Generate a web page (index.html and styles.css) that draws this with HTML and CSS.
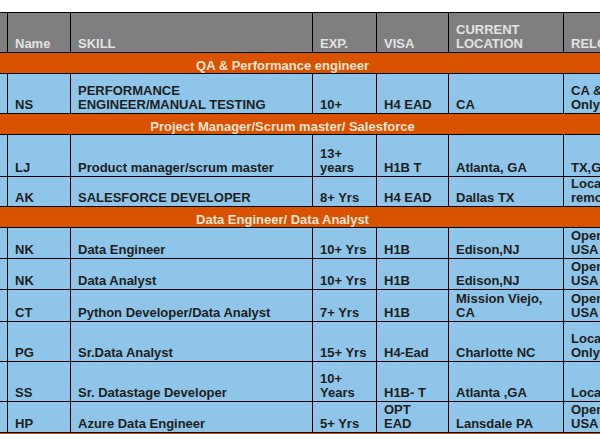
FILE: index.html
```html
<!DOCTYPE html>
<html lang="en">
<head>
<meta charset="utf-8">
<title>Hotlist</title>
<link rel="stylesheet" href="styles.css">
</head>
<body>
<div class="sheet">
<table class="grid">
  <colgroup>
    <col class="c0"><col class="c1"><col class="c2"><col class="c3"><col class="c4"><col class="c5"><col class="c6">
  </colgroup>
  <tr class="head h40">
    <td></td><td>Name</td><td>SKILL</td><td>EXP.</td><td>VISA</td><td>CURRENT<br>LOCATION</td><td>RELOCATION</td>
  </tr>
  <tr class="section"><td colspan="7">QA &amp; Performance engineer</td></tr>
  <tr class="h40">
    <td></td><td>NS</td><td>PERFORMANCE<br>ENGINEER/MANUAL TESTING</td><td>10+</td><td>H4 EAD</td><td>CA</td><td>CA &amp;<br>Only</td>
  </tr>
  <tr class="section"><td colspan="7">Project Manager/Scrum master/ Salesforce</td></tr>
  <tr class="h42">
    <td></td><td>LJ</td><td>Product manager/scrum master</td><td>13+<br>years</td><td>H1B T</td><td>Atlanta, GA</td><td>TX,GA</td>
  </tr>
  <tr class="h30">
    <td></td><td>AK</td><td>SALESFORCE DEVELOPER</td><td>8+ Yrs</td><td>H4 EAD</td><td>Dallas TX</td><td>Local/<br>remote</td>
  </tr>
  <tr class="section"><td colspan="7">Data Engineer/ Data Analyst</td></tr>
  <tr class="h31">
    <td></td><td>NK</td><td>Data Engineer</td><td>10+ Yrs</td><td>H1B</td><td>Edison,NJ</td><td>Open<br>USA</td>
  </tr>
  <tr class="h31">
    <td></td><td>NK</td><td>Data Analyst</td><td>10+ Yrs</td><td>H1B</td><td>Edison,NJ</td><td>Open<br>USA</td>
  </tr>
  <tr class="h32">
    <td></td><td>CT</td><td>Python Developer/Data Analyst</td><td>7+ Yrs</td><td>H1B</td><td>Mission Viejo,<br>CA</td><td>Open<br>USA</td>
  </tr>
  <tr class="h40">
    <td></td><td>PG</td><td>Sr.Data Analyst</td><td>15+ Yrs</td><td>H4-Ead</td><td>Charlotte NC</td><td>Local<br>Only</td>
  </tr>
  <tr class="h40">
    <td></td><td>SS</td><td>Sr. Datastage Developer</td><td>10+<br>Years</td><td>H1B- T</td><td>Atlanta ,GA</td><td>Local</td>
  </tr>
  <tr class="h31">
    <td></td><td>HP</td><td>Azure Data Engineer</td><td>5+ Yrs</td><td>OPT<br>EAD</td><td>Lansdale PA</td><td>Open<br>USA</td>
  </tr>
  <tr class="section"><td colspan="7">Data Engineer</td></tr>
</table>
</div>
</body>
</html>
```

FILE: styles.css
```css
html, body {
  margin: 0;
  padding: 0;
  background: #ffffff;
}
body {
  overflow: hidden;
  width: 600px;
  height: 434px;
}
.sheet {
  padding-top: 12px;
  width: 600px;
  overflow: hidden;
}
.grid {
  margin-left: -1px;
  border-collapse: collapse;
  table-layout: fixed;
  width: 650px;
  font-family: "Liberation Sans", Arial, sans-serif;
  font-weight: bold;
  font-size: 13px;
  line-height: 14px;
  color: #1e1e1e;
  background: #8ec5e9;
}
.c0 { width: 8px; }
.c1 { width: 63px; }
.c2 { width: 242px; }
.c3 { width: 64px; }
.c4 { width: 72px; }
.c5 { width: 115px; }
.c6 { width: 86px; }
.grid td {
  border: 1px solid #000000;
  padding: 0 2px 1px 7px;
  vertical-align: bottom;
  overflow: hidden;
  white-space: nowrap;
}
.grid td:first-child {
  padding: 0;
}
.head td {
  background: #7f7f7f;
  color: #e2e2e2;
}
.grid .section td {
  background: #d95200;
  color: #f6e4d6;
  text-align: center;
  padding: 0 84px 0 0;
  height: 20px;
}
.section { height: 21px; }
.h30 { height: 30px; }
.h31 { height: 31px; }
.h32 { height: 32px; }
.h40 { height: 40px; }
.h42 { height: 42px; }
```
